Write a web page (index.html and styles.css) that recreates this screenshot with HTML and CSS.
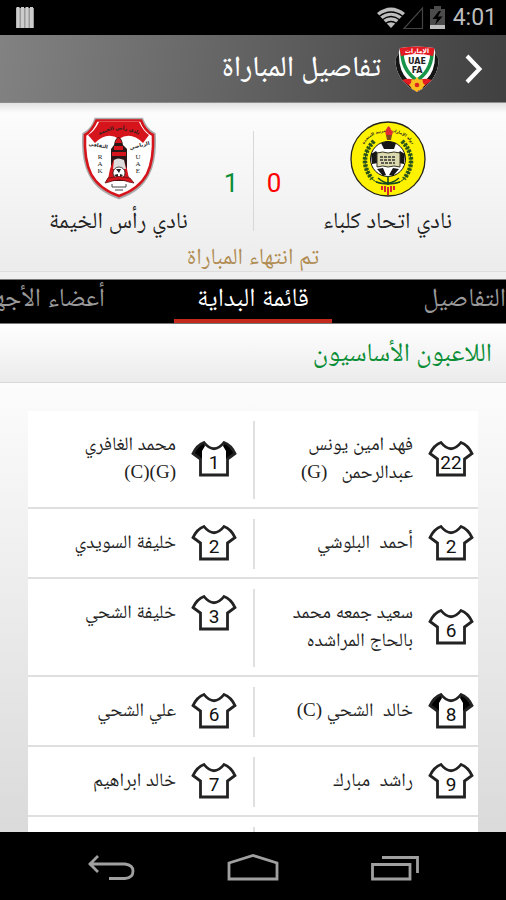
FILE: index.html
```html
<!DOCTYPE html>
<html lang="ar" dir="rtl">
<head>
<meta charset="utf-8">
<meta name="viewport" content="width=device-width, initial-scale=1">
<title>تفاصيل المباراة</title>
<link rel="stylesheet" href="styles.css">
</head>
<body>
<svg class="defs" aria-hidden="true">
  <symbol id="shirt" viewBox="0 0 46 36">
    <path d="M13 1.500Q23 14 33 1.500Q40 4 44 12.500L36.500 18V34H9.500V18L2 12.500Q6 4 13 1.500Z" fill="#fff"/>
    <path class="sleeves" d="M13 2L14 5L11 10V18H9.500L2 12.500Q6 4 13 2ZM33 2L32 5L35 10V18H36.500L44 12.500Q40 4 33 2Z"/>
    <path d="M13 1.500Q23 14 33 1.500Q40 4 44 12.500L36.500 18V34H9.500V18L2 12.500Q6 4 13 1.500Z" fill="none" stroke="#222" stroke-width="2.800"/>
  </symbol>
</svg>

<div class="statusbar" dir="ltr">
  <svg class="bars" width="18" height="22" viewBox="0 0 18 22" aria-hidden="true"><path d="M0 1h18v20H0z" fill="#999"/><path d="M.5 0h3v21h-3zM5 0h3v21H5zM9.500 0h3v21h-3zM14 0h3v21h-3z" fill="#ccc"/></svg>
  <svg width="70" height="24" viewBox="0 0 70 24" aria-hidden="true">
    <path d="M0 7Q14-4 28 7L14 22Z" fill="#bdbdbd"/>
    <path d="M2 10.500Q14 1.500 26 10.500M5 14Q14 7 23 14M8.500 17.500Q14 13.500 19.500 17.500" fill="none" stroke="#000" stroke-width="1.300"/>
    <path d="M27 22.500H45.500V2Z" fill="none" stroke="#444" stroke-width="1.200"/>
    <path d="M53 3h4V0h7v3h4v20H53z" fill="#4b4b4b"/><path d="M53 19h15v4H53z" fill="#bdbdbd"/>
    <path d="M62 5L55.500 13H60L58 19L65.500 10.500H61L64 5Z" fill="#000"/>
  </svg>
  <time class="clock">4:01</time>
</div>

<header class="appbar">
  <button class="back" type="button" aria-label="رجوع"><svg width="20" height="30" viewBox="0 0 20 30"><path d="M3 2L15.500 15L3 28" fill="none" stroke="#fff" stroke-width="4"/></svg></button>
  <svg class="brand" width="44" height="46" viewBox="0 0 44 46" role="img" aria-label="UAE FA">
    <defs><clipPath id="fa"><path d="M5 2Q22-1 39 2Q40 8 43.500 13Q44 34 22 46Q0 34 .5 13Q4 8 5 2Z"/></clipPath></defs>
    <g clip-path="url(#fa)">
      <path d="M0 0h44v46H0z" fill="#fff"/>
      <path d="M0 10Q-1 34 22 46L13 34Q3 25 4 5ZM44 10Q45 34 22 46L31 34Q41 25 40 5Z" fill="#151515"/>
      <path d="M7 3Q6 22 20 33L29 40M37 3Q38 22 24 33L15 40" fill="none" stroke="#179447" stroke-width="3.500"/>
      <path d="M4 0H40L38 10Q22 6 6 10Z" fill="#e31b23"/>
      <path d="M7 34Q15 31 22 35Q29 31 37 34L22 46Z" fill="#e31b23"/>
      <path d="M22 31l2 2.500h3.500l.5 3.500 2 2-2 2-1 3.500H23L22 47l-2-2.500h-3L16 41l-2-2 2-2 .5-3.500H20Z" fill="#f9be20"/><circle cx="22" cy="39" r="2.300" fill="#d22"/>
    </g>
    <text x="22" y="7" class="fa-top">الإمارات</text>
    <text x="22" y="18" class="fa-text">UAE</text><text x="22" y="27" class="fa-text">FA</text>
  </svg>
  <h1>تفاصيل المباراة</h1>
</header>

<main>
  <section class="match">
    <div class="teams">
      <div class="team">
        <svg width="76" height="76" viewBox="0 0 76 76" aria-hidden="true">
          <circle cx="38" cy="38" r="37" fill="#fff200" stroke="#23231a" stroke-width="1.300"/>
          <path id="arc" d="M10 36Q14 11 38 11Q62 11 66 36" fill="none"/>
          <text class="ring"><textPath href="#arc" startOffset="50%">دولة الإمارات العربية المتحدة</textPath></text>
          <path d="M24 20Q7 38 22 58M52 20Q69 38 54 58" fill="none" stroke="#29551c" stroke-width="4.500" stroke-dasharray="2.500 1.200"/>
          <path d="M24 20Q7 38 22 58Q29 64 36 62M52 20Q69 38 54 58Q47 64 40 62" fill="none" stroke="#29551c" stroke-width="1"/>
          <circle cx="38" cy="38" r="17.500" fill="#fff" stroke="#111"/>
          <path d="M31 22l7-2 8 2-2 6H34ZM21 33l5-3 4 5-2 7-6 1ZM55 33l-5-3-4 5 2 7 6 1ZM27 48l6-1 3 7-3 1ZM49 48l-6-1-4 7 4 1Z" fill="#161616"/>
          <path d="M27 32Q33 30 38 32Q44 30 50 32V46Q44 44 38 46Q33 44 27 46Z" fill="#ddd9af" stroke="#33331f"/>
          <path d="M30 36h16M30 39h16M31 42h14" stroke="#333" stroke-width="1.400" stroke-dasharray="3 1"/>
          <path d="M36 14h6l-1 5h-4Z" fill="#7b4a1d"/><path d="M38.500 5Q34 10 36 14H42Q44 10 41 9Q41 7 38.500 5Z" fill="#e22a32"/>
          <path d="M38 55v9M26 61Q38 65 50 61M28 57Q34 62 38 62Q43 62 49 57" fill="none" stroke="#174a21" stroke-width="1.600"/>
          <path d="M32 65v4M35 65v6M38 66v8M41 65v6M44 65v4" fill="none" stroke="#d3262e" stroke-width="2"/>
        </svg>
        <h2>نادي اتحاد كلباء</h2>
      </div>
      <div class="score"><span class="goals away">0</span><span class="goals home">1</span></div>
      <div class="team">
        <svg width="76" height="84" viewBox="0 0 76 84" aria-hidden="true">
          <path d="M14.500 2H61Q65 13 73.500 17Q75 43 67 58Q59 74 38 81Q17 74 9 58Q1 43 2.500 17Q11 13 14.500 2Z" fill="#fff" stroke="#aaa" stroke-width="2.500"/>
          <path d="M15.500 3.500H60Q64 14 72 18Q73 43 66 57Q58 72 38 79Q18 72 10 57Q3 43 4 18Q11 14 15.500 3.500Z" fill="#fff" stroke="#d5141b" stroke-width="2.600"/>
          <path d="M18 5H58Q62 14 68 18L62 26Q50 14 38 22Q26 14 14 26L7 18Q14 14 18 5Z" fill="#d5141b"/>
          <path id="name" d="M15 20Q38 5 61 20" fill="none"/><text class="crest-top"><textPath href="#name" startOffset="50%">نادي رأس الخيمة</textPath></text>
          <text class="crest-side" x="17" y="30" transform="rotate(10 17 30)">الثقافي</text><text class="crest-side" x="59" y="30" transform="rotate(-14 59 30)">الرياضي</text>
          <path d="M33 28Q34 21 37.500 20Q41 21 42 28L46 32V57L50 64H25L30 57V32Z" fill="#2b1617"/>
          <path d="M34 26Q37.500 16 41 26ZM31 35h14v4H31ZM33 29h9v4h-9ZM29 52l4-10v18l-6 2ZM42 42l4 10 2 10-6-2Z" fill="#d5141b"/>
          <path d="M33 43Q37 40 43 43L45 52H32Z" fill="#ddd"/><circle cx="38" cy="56" r="6" fill="#fff" stroke="#222" stroke-width=".8"/>
          <path d="M35 52h5l-2 4ZM33 58l4-1v4ZM42 58l-3-1v4Z" fill="#222"/>
          <path d="M24 66L27 61Q38 58 49 61L53 66L48 65Q38 61 28 65Z" fill="#d5141b" stroke="#641015" stroke-width=".8"/>
          <path d="M31 67v3h14v-3M34 73h8" fill="none" stroke="#444" stroke-width="1"/>
          <text class="crest-letter" x="19" y="42">R</text><text class="crest-letter" x="19" y="49">A</text><text class="crest-letter" x="19" y="56">K</text>
          <text class="crest-letter" x="57" y="42">U</text><text class="crest-letter" x="57" y="49">A</text><text class="crest-letter" x="57" y="56">E</text>
        </svg>
        <h2>نادي رأس الخيمة</h2>
      </div>
    </div>
    <p class="state">تم انتهاء المباراة</p>
  </section>

  <nav class="tabs">
    <a href="#details">التفاصيل</a>
    <a href="#lineup" class="active" aria-current="page">قائمة البداية</a>
    <a href="#staff" class="last">أعضاء الأجهزة</a>
  </nav>

  <h2 class="section-title">اللاعبون الأساسيون</h2>

  <section class="lineup" id="lineup">
    <ul>
      <li>
        <div class="player"><span class="shirt"><svg><use href="#shirt"/></svg><b>22</b></span><span class="name">فهد امين يونس<br>عبدالرحمن &#160; <bdi>(G)</bdi></span></div>
        <div class="player keeper"><span class="shirt"><svg><use href="#shirt"/></svg><b>1</b></span><span class="name">محمد الغافري<br><bdi>(G)</bdi><bdi>(C)</bdi></span></div>
      </li>
      <li>
        <div class="player"><span class="shirt"><svg><use href="#shirt"/></svg><b>2</b></span><span class="name">أحمد &#160;البلوشي</span></div>
        <div class="player"><span class="shirt"><svg><use href="#shirt"/></svg><b>2</b></span><span class="name">خليفة السويدي</span></div>
      </li>
      <li>
        <div class="player"><span class="shirt"><svg><use href="#shirt"/></svg><b>6</b></span><span class="name">سعيد جمعه محمد<br>بالحاج المراشده</span></div>
        <div class="player"><span class="shirt"><svg><use href="#shirt"/></svg><b>3</b></span><span class="name">خليفة الشحي</span></div>
      </li>
      <li>
        <div class="player keeper"><span class="shirt"><svg><use href="#shirt"/></svg><b>8</b></span><span class="name">خالد &#160;الشحي <bdi>(C)</bdi></span></div>
        <div class="player"><span class="shirt"><svg><use href="#shirt"/></svg><b>6</b></span><span class="name">علي الشحي</span></div>
      </li>
      <li>
        <div class="player"><span class="shirt"><svg><use href="#shirt"/></svg><b>9</b></span><span class="name">راشد &#160;مبارك</span></div>
        <div class="player"><span class="shirt"><svg><use href="#shirt"/></svg><b>7</b></span><span class="name">خالد ابراهيم</span></div>
      </li>
      <li><div class="player"></div><div class="player"></div></li>
    </ul>
  </section>
</main>

<nav class="softkeys" dir="ltr">
  <button type="button" aria-label="Back"><svg width="50" height="30" viewBox="0 0 50 30"><path d="M3 11H39Q47 12 47 18Q47 25 39 25.500H23M12 3L4 11L12 19" fill="none" stroke="#a0a0a0" stroke-width="2.800"/></svg></button>
  <button type="button" aria-label="Home"><svg width="54" height="30" viewBox="0 0 54 30"><path d="M3 10L27 2.500L51 10V26H3Z" fill="none" stroke="#a0a0a0" stroke-width="2.800"/></svg></button>
  <button type="button" aria-label="Recent apps"><svg width="50" height="30" viewBox="0 0 50 30"><path d="M2.500 11.500H40V26H2.500ZM12 4.500H47.500V20" fill="none" stroke="#a0a0a0" stroke-width="2.800"/></svg></button>
</nav>
</body>
</html>
```
FILE: styles.css
```css
* { box-sizing: border-box; }

body {
  margin: 0;
  height: 100vh;
  display: flex;
  flex-direction: column;
  overflow: hidden;
  background: #000;
  color: #222;
  font-family: Roboto, "Droid Arabic Naskh", "Noto Naskh Arabic", "Noto Naskh Arabic UI", "DejaVu Sans", sans-serif;
}

h1, h2, p, ul { margin: 0; padding: 0; font-weight: 400; }
button { padding: 0; border: 0; background: none; display: flex; }
.defs { display: none; }

.statusbar {
  height: 35px;
  flex: none;
  display: flex;
  align-items: center;
  gap: 6px;
  padding: 0 9px 0 16px;
}
.bars { margin-right: auto; }
.clock { color: #bdbdbd; font-size: 23px; line-height: 34px; }

.appbar {
  height: 68px;
  flex: none;
  display: flex;
  align-items: center;
  padding: 0 22px;
  background: linear-gradient(100deg, #828282, #404040);
  border-bottom: 1px solid #8c8c8c;
}
.brand { margin: 0 25px 0 14px; }
.fa-text { font: 700 8px "DejaVu Sans", sans-serif; text-anchor: middle; fill: #222; }
.fa-top { font: 700 6px "DejaVu Sans", sans-serif; text-anchor: middle; fill: #fff; }
h1 { padding-bottom: 6px; color: #fff; font-size: 29px; line-height: 40px; font-weight: 500; white-space: nowrap; }

main {
  flex: 1;
  min-height: 0;
  display: flex;
  flex-direction: column;
  background: #efefef;
}

.match {
  flex: none;
  height: 169px;
  margin-bottom: 7px;
  padding-top: 14px;
  background: linear-gradient(#e2e2e2, #fcfcfc 10px, #ececec);
  border-bottom: 1px solid #ddd;
}
.teams { display: grid; grid-template-columns: 1fr 80px 1fr; height: 120px; }
.team { display: flex; flex-direction: column; align-items: center; }
.team:first-child { padding: 4px 24px 0 0; }
.team:last-child { padding-left: 24px; }
.team h2 {
  margin-top: auto;
  font-size: 23px;
  line-height: 32px;
  white-space: nowrap;
}
.score {
  display: grid;
  grid-template-columns: 1fr 1fr;
  height: 100px;
  margin-top: 14px;
  align-items: center;
  background: linear-gradient(#d8d8d8, #d8d8d8) center / 1px 100% no-repeat;
}
.goals { font-size: 26px; line-height: 32px; text-align: center; }
.away { padding: 4px 0 0 2px; color: #f00; }
.home { padding: 4px 4px 0 0; color: #0b8e36; }
.state { padding-top: 4px; color: #b08c52; font-size: 23px; line-height: 32px; text-align: center; }
.ring, .crest-top, .crest-side { font: 700 5px "DejaVu Sans", sans-serif; text-anchor: middle; fill: #222; }
.ring { font-size: 4px; }
.crest-letter { font: 7px "Liberation Serif", serif; text-anchor: middle; fill: #222; }

.tabs {
  flex: none;
  height: 45px;
  display: grid;
  grid-template-columns: 1fr 158px 1fr;
  background: #000;
  border-top: 1px solid #777;
  border-bottom: 1px solid #777;
}
.tabs a {
  color: #999;
  font-size: 26px;
  line-height: 34px;
  text-decoration: none;
  white-space: nowrap;
  overflow: hidden;
}
.tabs .active { color: #fff; text-align: center; border-bottom: 4px solid #c52b1c; }
.tabs .last { padding-right: 69px; }

.section-title {
  flex: none;
  height: 59px;
  padding: 0 14px;
  color: #0b8e36;
  font-size: 26px;
  line-height: 56px;
  background: linear-gradient(#fff, #ebebeb);
  border-bottom: 1px solid #d8d8d8;
}

.lineup {
  flex: 1;
  min-height: 0;
  overflow: hidden;
  padding: 28px 28px 0;
  background: linear-gradient(#fcfcfc, #dadada);
}
.lineup ul { list-style: none; background: #fff; }
.lineup li {
  display: grid;
  grid-template-columns: 1fr 1fr;
  min-height: 70px;
  padding: 10px 0 8px;
  border-bottom: 2px solid #dfdfdf;
}
.player { display: flex; align-items: center; align-self: start; padding: 9px 4px 11px 0; }
.player:first-child { align-self: stretch; border-left: 2px solid #e0e0e0; }
.player:last-child { padding-right: 16px; }
.shirt { display: grid; width: 46px; height: 36px; margin: -5px 0; flex: none; }
.shirt svg { grid-area: 1 / 1; width: 46px; height: 36px; }
.shirt b {
  grid-area: 1 / 1;
  z-index: 1;
  padding-top: 10px;
  color: #111;
  font-size: 19px;
  line-height: 24px;
  font-weight: 400;
  text-align: center;
}
.sleeves { fill: var(--sleeve, none); }
.keeper { --sleeve: #000; }
.name {
  padding: 0 15px 2px 0;
  font-size: 19px;
  line-height: 28px;
  white-space: nowrap;
}
.name bdi { font-family: "Liberation Serif", serif; }

.softkeys {
  flex: none;
  height: 68px;
  display: flex;
  align-items: center;
  justify-content: center;
  gap: 90px;
  padding-top: 3px;
  background: #000;
}
```
